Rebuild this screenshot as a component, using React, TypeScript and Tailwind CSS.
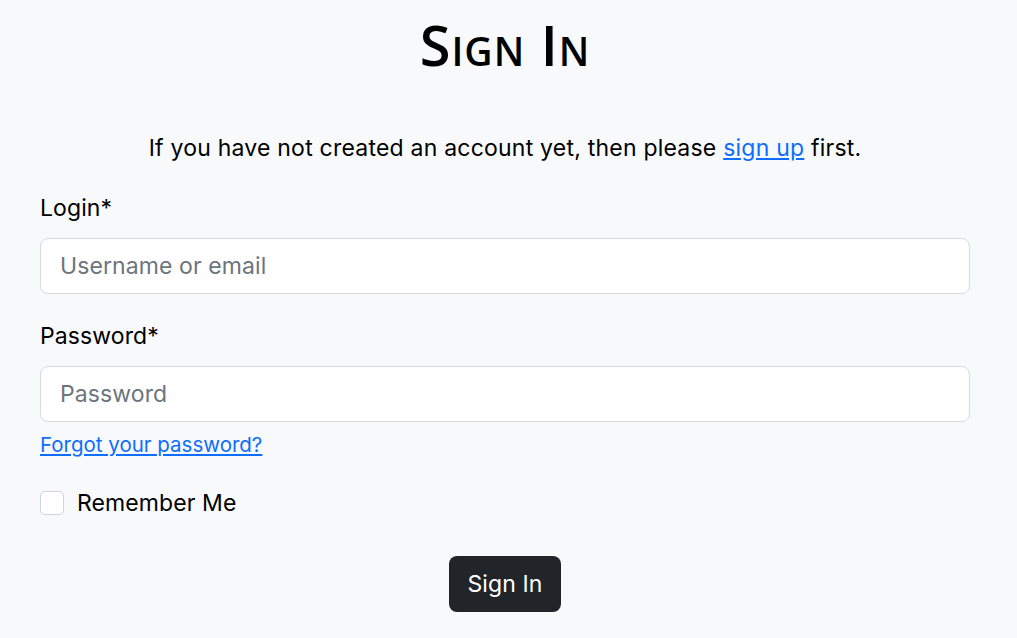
import { useState } from 'react'

export default function App() {
  const [remember, setRemember] = useState(false)

  return (
    <div className="min-h-[638px] bg-[#f8f9fa] text-black font-['Inter',sans-serif]">
      <div className="px-[40px] w-[1010px]">
        {/* Title */}
        <h1 className="pt-[12px] text-center text-[56px] leading-[64px] font-semibold [font-variant:small-caps] font-['Open_Sans',sans-serif] tracking-[1px]">
          Sign In
        </h1>

        {/* Intro */}
        <p className="mt-[57px] text-center text-[23px] leading-[30px] tracking-[0.22px]">
          If you have not created an account yet, then please{' '}
          <a href="#" className="text-[#0d6efd] underline">sign up</a> first.
        </p>

        <form className="mt-[30px]" onSubmit={(e) => e.preventDefault()}>
          {/* Login */}
          <label className="block text-[23px] leading-[30px] tracking-[0.1px]">Login*</label>
          <input
            type="text"
            placeholder="Username or email"
            className="mt-[15px] block w-[930px] h-[56px] px-[19px] bg-white border border-[#d6dadf] rounded-[8px] text-[23px] tracking-[0.1px] placeholder:text-[#6c757d] outline-none"
          />

          {/* Password */}
          <label className="mt-[27px] block text-[23px] leading-[30px] tracking-[0.1px]">Password*</label>
          <input
            type="password"
            placeholder="Password"
            className="mt-[15px] block w-[930px] h-[56px] px-[19px] bg-white border border-[#d6dadf] rounded-[8px] text-[23px] tracking-[0.1px] placeholder:text-[#6c757d] outline-none"
          />
          <a href="#" className="mt-[9px] inline-block text-[20.5px] leading-[28px] text-[#0d6efd] underline">
            Forgot your password?
          </a>

          {/* Remember */}
          <label className="mt-[29px] flex items-center gap-[13px] text-[23px] leading-[30px] tracking-[0.1px]">
            <input
              type="checkbox"
              checked={remember}
              onChange={() => setRemember(!remember)}
              className="appearance-none w-[24px] h-[24px] bg-white border border-[#ced4da] rounded-[5px]"
            />
            Remember Me
          </label>

          <div className="mt-[38px] flex justify-center">
            <button className="h-[56px] px-[19px] bg-[#212529] text-white text-[23px] tracking-[0.1px] rounded-[8px]">
              Sign In
            </button>
          </div>
        </form>
      </div>
    </div>
  )
}
